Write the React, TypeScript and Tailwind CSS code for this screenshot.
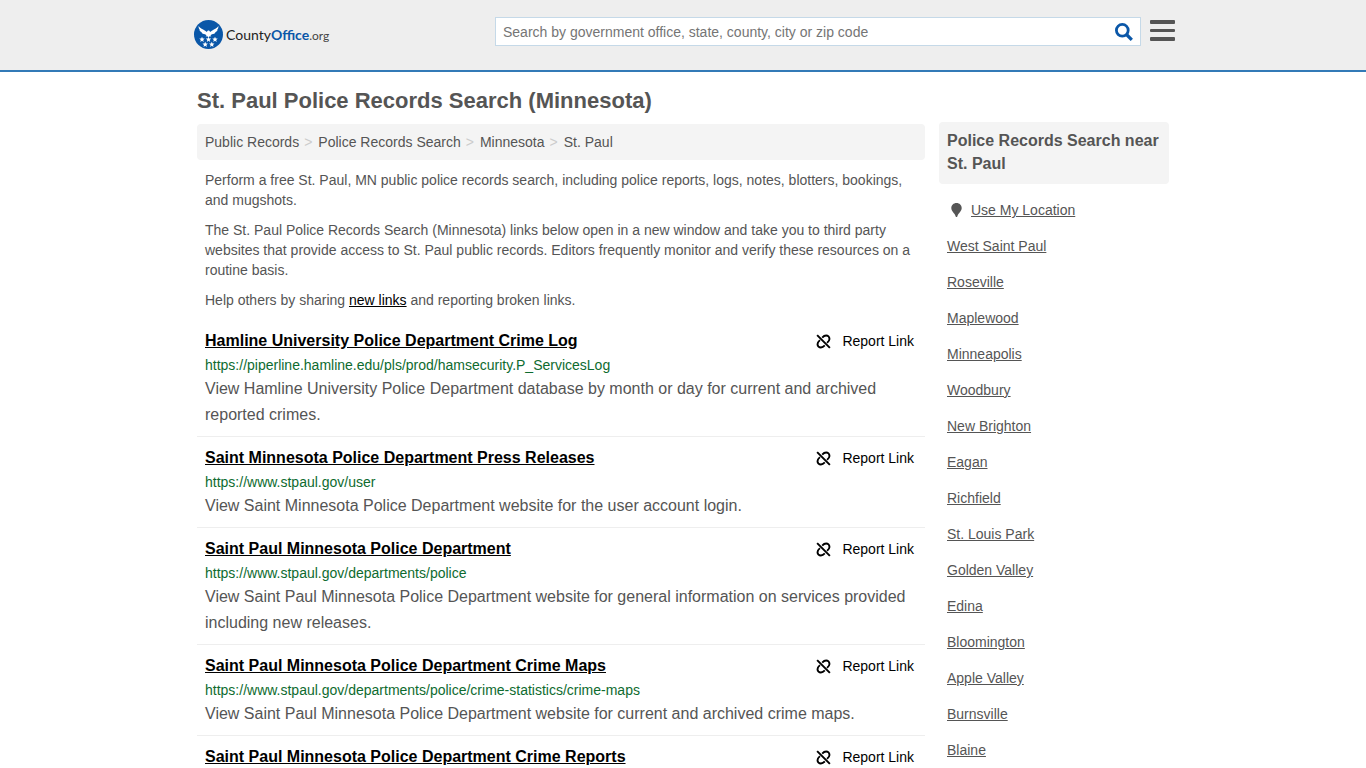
type RecordLink = {
  title: string;
  url?: string;
  description?: string;
}

const breadcrumbs = ['Public Records', 'Police Records Search', 'Minnesota', 'St. Paul']

const records: RecordLink[] = [
  {
    title: 'Hamline University Police Department Crime Log',
    url: 'https://piperline.hamline.edu/pls/prod/hamsecurity.P_ServicesLog',
    description: 'View Hamline University Police Department database by month or day for current and archived reported crimes.'
  },
  {
    title: 'Saint Minnesota Police Department Press Releases',
    url: 'https://www.stpaul.gov/user',
    description: 'View Saint Minnesota Police Department website for the user account login.'
  },
  {
    title: 'Saint Paul Minnesota Police Department',
    url: 'https://www.stpaul.gov/departments/police',
    description: 'View Saint Paul Minnesota Police Department website for general information on services provided including new releases.'
  },
  {
    title: 'Saint Paul Minnesota Police Department Crime Maps',
    url: 'https://www.stpaul.gov/departments/police/crime-statistics/crime-maps',
    description: 'View Saint Paul Minnesota Police Department website for current and archived crime maps.'
  },
  {
    title: 'Saint Paul Minnesota Police Department Crime Reports'
  }
]

const nearby = [
  'West Saint Paul', 'Roseville', 'Maplewood', 'Minneapolis', 'Woodbury',
  'New Brighton', 'Eagan', 'Richfield', 'St. Louis Park', 'Golden Valley',
  'Edina', 'Bloomington', 'Apple Valley', 'Burnsville', 'Blaine'
]

const starPoints = '0,-2.8 0.8,-0.9 2.7,-0.9 1.2,0.4 1.7,2.4 0,1.2 -1.7,2.4 -1.2,0.4 -2.7,-0.9 -0.8,-0.9'

const stars = [
  { x: 8, y: 19.5 },
  { x: 14.5, y: 19.5 },
  { x: 21, y: 19.5 },
  { x: 11.2, y: 24.5 },
  { x: 17.8, y: 24.5 }
]

function Logo() {
  return (
    <a href="#" className="flex items-center gap-[3px] font-[Lato,sans-serif] text-sm leading-5 text-[#222]">
      <svg className="w-[29px] h-[29px] shrink-0" viewBox="0 0 29 29" aria-hidden="true">
        <circle cx="14.5" cy="14.5" r="14.5" fill="#0a57a8" />
        {/* Eagle with open wings */}
        <path
          d="M4.5 6C6 8.500 9 9.300 11.500 11l1.400 1c.2-1.100.8-1.600 1.600-1.600s1.400.5 1.600 1.600l1.400-1C20 9.300 23 8.500 24.500 6c0 2-.6 3.300-1.700 4.200l.9-.1c-.6 1.300-1.600 2-2.900 2.400l.8.1c-.9 1-2 1.500-3.600 1.600l-1.500 1 .8 1.300-1.500-.3-1.300 1-1.300-1-1.500.3.8-1.300-1.500-1c-1.600-.1-2.700-.6-3.600-1.600l.8-.1c-1.300-.4-2.300-1.100-2.900-2.400l.9.1C5.100 9.300 4.500 8 4.500 6z"
          fill="#fff"
        />
        {stars.map((star) => (
          <polygon
            key={`${star.x}-${star.y}`}
            points={starPoints}
            transform={`translate(${star.x} ${star.y})`}
            fill="#fff"
          />
        ))}
      </svg>
      <span>County<b className="text-[#0a57a8]">Office</b><span className="text-xs text-[#444]">.org</span></span>
    </a>
  )
}

function UnlinkIcon() {
  return (
    <svg className="w-[15px] h-[15px]" viewBox="0 0 16 16" fill="none" stroke="currentColor" strokeWidth="2" aria-hidden="true">
      <path d="M1.2 1.2l13.600 13.600" />
      <path d="M6.6 3.800C7.800 2.500 9 1.600 10.800 1.600a3.600 3.600 0 0 1 3.600 3.600c0 1.700-1 2.700-2.600 4.200" />
      <path d="M9.4 12.200C8.200 13.500 7 14.400 5.200 14.400a3.600 3.600 0 0 1-3.600-3.600c0-1.700 1-2.700 2.600-4.200" />
    </svg>
  )
}

function Header() {
  return (
    <header className="bg-[#eee] border-b-2 border-[#337ab7]">
      <div className="max-w-[984px] mx-auto h-[70px] pl-[3px] flex items-start justify-between">
        <div className="pt-5">
          <Logo />
        </div>
        <div className="flex items-start gap-[9px] pt-[17px]">
          <form role="search" className="w-[646px] h-[29px] flex items-center bg-white border border-[#c5d9e8]">
            <input
              type="text"
              aria-label="Search by government office, state, county, city or zip code"
              placeholder="Search by government office, state, county, city or zip code"
              className="flex-1 min-w-0 px-[7px] text-sm leading-5 text-[#555] placeholder:text-[#757575] outline-none"
            />
            <button type="submit" aria-label="Search" className="px-[7px]">
              <svg className="w-[18px] h-[18px]" viewBox="0 0 18 18" fill="none" stroke="#0a57a8" aria-hidden="true">
                <circle cx="7.3" cy="7.3" r="5.9" strokeWidth="2.8" />
                <path d="M11.5 11.5l5.300 5.300" strokeWidth="3.2" />
              </svg>
            </button>
          </form>
          <button type="button" aria-label="Menu" className="pt-[3px]">
            <svg className="w-[25px] h-[22px]" viewBox="0 0 25 22" fill="#555" aria-hidden="true">
              <rect width="25" height="4" rx="1" />
              <rect y="9" width="25" height="3" rx="1" />
              <rect y="17" width="25" height="4" rx="1" />
            </svg>
          </button>
        </div>
      </div>
    </header>
  )
}

function RecordItem({ record }: { record: RecordLink }) {
  return (
    <li className="flex flex-col p-2 border-b border-[#eee]">
      <div className="flex items-center justify-between h-[26px] pr-[3px]">
        <h2 className="text-base font-bold">
          <a href={record.url || '#'} className="text-black underline">{record.title}</a>
        </h2>
        <button type="button" className="flex items-center gap-[11px] text-sm text-black">
          <UnlinkIcon />
          Report Link
        </button>
      </div>
      {record.url && <cite className="not-italic text-sm leading-[22px] text-[#0e6b2f]">{record.url}</cite>}
      {record.description && <p className="text-base leading-[26px]">{record.description}</p>}
    </li>
  )
}

function Sidebar() {
  return (
    <aside className="w-[230px] shrink-0 pt-[50px]">
      <h3 className="px-2 pt-[7px] pb-[9px] rounded bg-[#f4f4f4] text-base leading-[23px] font-bold">
        Police Records Search near St. Paul
      </h3>
      <ul className="pt-2 px-2 text-sm leading-9">
        <li className="flex items-center gap-[9px] pl-1">
          <svg className="w-[11px] h-[14px]" viewBox="0 0 11 14" fill="#555" aria-hidden="true">
            <path d="M5.5 0C2.500 0 .3 2.200.3 5.100c0 3.300 3.400 5.100 4.400 8.300.2.800 1.400.8 1.600 0 1-3.200 4.400-5 4.400-8.300C10.700 2.200 8.500 0 5.500 0z" />
          </svg>
          <a href="#" className="underline">Use My Location</a>
        </li>
        {nearby.map((city) => (
          <li key={city}>
            <a href="#" className="underline">{city}</a>
          </li>
        ))}
      </ul>
    </aside>
  )
}

export default function App() {
  return (
    <div className="min-h-screen bg-white font-['Liberation_Sans',Arial,sans-serif] text-[#555]">
      <Header />

      <div className="max-w-[972px] mx-auto flex gap-[14px]">
        <main className="flex-1 min-w-0 pt-3">
          <h1 className="text-[22px] leading-[34px] font-bold mb-[6px]">
            St. Paul Police Records Search (Minnesota)
          </h1>

          <nav aria-label="Breadcrumb" className="p-2 rounded bg-[#f4f4f4]">
            <ol className="flex text-sm leading-5">
              {breadcrumbs.map((crumb, index) => (
                <li key={crumb} className="flex">
                  {index > 0 && <span className="pl-[5px] pr-[6px] text-[#ccc]">&gt;</span>}
                  <a href="#">{crumb}</a>
                </li>
              ))}
            </ol>
          </nav>

          <div className="px-2 py-[10px] space-y-[10px] text-sm leading-5">
            <p>
              Perform a free St. Paul, MN public police records search, including police reports, logs, notes, blotters, bookings, and mugshots.
            </p>
            <p>
              The St. Paul Police Records Search (Minnesota) links below open in a new window and take you to third party websites that provide access to St. Paul public records. Editors frequently monitor and verify these resources on a routine basis.
            </p>
            <p>
              Help others by sharing <a href="#" className="text-black underline">new links</a> and reporting broken links.
            </p>
          </div>

          <ul>
            {records.map((record) => (
              <RecordItem key={record.title} record={record} />
            ))}
          </ul>
        </main>

        <Sidebar />
      </div>
    </div>
  )
}
